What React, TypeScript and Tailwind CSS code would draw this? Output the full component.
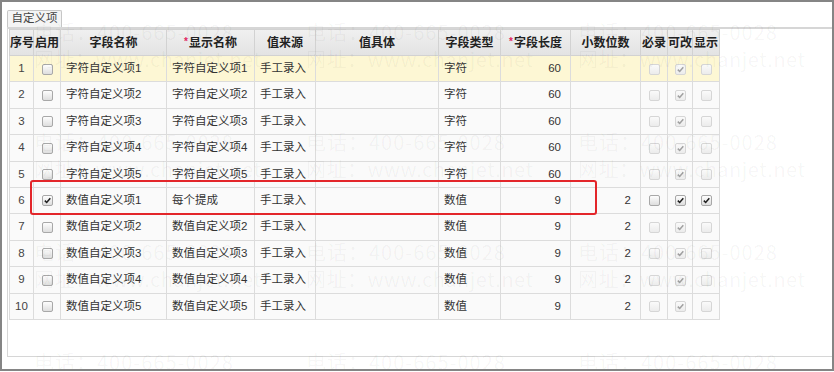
import React from 'react';

type Row = {
  no: number;
  enabled: boolean;
  name: string;
  display: string;
  type: string;
  len: string;
  dec: string;
  active: boolean;
  show: boolean;
};

const rows: Row[] = [
  ...[1, 2, 3, 4, 5].map((n) => ({
    no: n,
    enabled: false,
    name: `字符自定义项${n}`,
    display: `字符自定义项${n}`,
    type: '字符',
    len: '60',
    dec: '',
    active: false,
    show: false,
  })),
  { no: 6, enabled: true, name: '数值自定义项1', display: '每个提成', type: '数值', len: '9', dec: '2', active: true, show: true },
  ...[2, 3, 4, 5].map((n, i) => ({
    no: 7 + i,
    enabled: false,
    name: `数值自定义项${n}`,
    display: `数值自定义项${n}`,
    type: '数值',
    len: '9',
    dec: '2',
    active: false,
    show: false,
  })),
];

const Check = ({ checked, disabled }: { checked: boolean; disabled?: boolean }) => (
  <span
    className={
      disabled
        ? 'relative inline-block w-[11px] h-[11px] align-middle rounded-[2px] border border-[#d6d6d6] bg-gradient-to-b from-[#fafafa] to-[#ececec]'
        : 'relative inline-block w-[11px] h-[11px] align-middle rounded-[2px] border border-[#a8a8a8] bg-gradient-to-b from-[#fdfdfd] to-[#dedede]'
    }
  >
    {checked && (
      <svg viewBox="0 0 9 9" className="absolute left-0 top-0 w-[9px] h-[9px]">
        <path
          d="M1.8 4.6 L3.7 6.5 L7.3 2.2"
          fill="none"
          stroke={disabled ? '#a0a0a0' : '#1e1e1e'}
          strokeWidth="1.5"
        />
      </svg>
    )}
  </span>
);

const Req = () => <span className="text-[#e0245e] text-[10px] align-top mr-[1px]">*</span>;

// faint repeated watermark laid over the whole page
const Watermark = () => (
  <div className="absolute left-[32px] top-[16px] grid grid-cols-[272px_272px_272px] auto-rows-[110px] pointer-events-none font-['Noto_Sans_CJK_SC',sans-serif] text-[20px] leading-[27px] text-black/[0.045] whitespace-nowrap">
    {Array.from({ length: 12 }).map((_, i) => (
      <div key={i} className="flex flex-col">
        <span className="tracking-[1px]">电话：400-665-0028</span>
        <span className="tracking-[0.5px]">网址：www.chanjet.net</span>
      </div>
    ))}
  </div>
);

export default function App() {
  const th = 'border border-[#d2d2d2] font-bold text-[12px] text-[#222] text-center px-0 whitespace-nowrap';
  const td = 'border border-[#dcdcdc] pl-[5px] pr-0 whitespace-nowrap';

  return (
    <div className="w-[834px] h-[372px] bg-white overflow-hidden">
      <div className="relative w-[834px] h-[371px] border-2 border-[#858585] bg-white overflow-hidden font-['Liberation_Sans','Noto_Sans_CJK_SC',sans-serif] text-[12px] text-[#333]">
        <div className="pt-[8px] pl-[5px] flex flex-col">
          <div className="w-[55px] h-[17px] border border-b-0 border-[#c6c6c6] bg-[#f4f4f4] rounded-t-[2px] flex items-center justify-center text-[11.5px] text-[#444] leading-none">
            自定义项
          </div>
          <div className="h-[330px] border-t-2 border-l border-b border-[#d6d6d6] pl-[1px]">
            <table className="table-fixed border-collapse w-[710px] text-[11.5px]">
              <colgroup>
                <col className="w-[24px]" />
                <col className="w-[27px]" />
                <col className="w-[106px]" />
                <col className="w-[88px]" />
                <col className="w-[61px]" />
                <col className="w-[123px]" />
                <col className="w-[62px]" />
                <col className="w-[70px]" />
                <col className="w-[70px]" />
                <col className="w-[27px]" />
                <col className="w-[25px]" />
                <col className="w-[27px]" />
              </colgroup>
              <thead>
                <tr className="h-[26px] bg-gradient-to-b from-[#f0f0f0] to-[#e3e3e3]">
                  <th className={th}>序号</th>
                  <th className={th}>启用</th>
                  <th className={th}>字段名称</th>
                  <th className={th}><Req />显示名称</th>
                  <th className={th}>值来源</th>
                  <th className={th}>值具体</th>
                  <th className={th}>字段类型</th>
                  <th className={th}><Req />字段长度</th>
                  <th className={th}>小数位数</th>
                  <th className={th}>必录</th>
                  <th className={th}>可改</th>
                  <th className={th}>显示</th>
                </tr>
              </thead>
              <tbody>
                {rows.map((r) => (
                  <tr
                    key={r.no}
                    className={r.no === 1 ? 'h-[26.4px] bg-[#fdf7d4]' : 'h-[26.4px] bg-[#fafafa]'}
                  >
                    <td className="border border-[#dcdcdc] text-center text-[#444]">{r.no}</td>
                    <td className="border border-[#dcdcdc] text-center"><Check checked={r.enabled} /></td>
                    <td className={td}>{r.name}</td>
                    <td className={td}>{r.display}</td>
                    <td className={td}>手工录入</td>
                    <td className={td}></td>
                    <td className={td}>{r.type}</td>
                    <td className={`${td} text-right pr-[9px]`}>{r.len}</td>
                    <td className={`${td} text-right pr-[9px]`}>{r.dec}</td>
                    <td className="border border-[#dcdcdc] text-center"><Check checked={false} disabled={!r.active} /></td>
                    <td className="border border-[#dcdcdc] text-center"><Check checked disabled={!r.active} /></td>
                    <td className="border border-[#dcdcdc] text-center"><Check checked={r.show} disabled={!r.active} /></td>
                  </tr>
                ))}
              </tbody>
            </table>
          </div>
        </div>

        {/* highlight annotation */}
        <div className="absolute left-[28px] top-[178px] w-[567px] h-[35px] border-2 border-[#e3262a] rounded-[3px] pointer-events-none" />

        <Watermark />
      </div>
    </div>
  );
}
